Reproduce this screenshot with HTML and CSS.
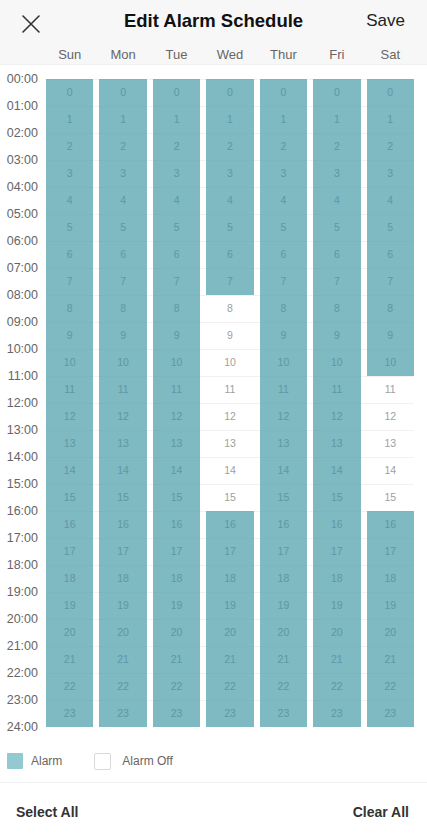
FILE: index.html
```html
<!DOCTYPE html>
<html>
<head>
<meta charset="utf-8">
<link rel="stylesheet" href="styles.css">
</head>
<body>
<div class="head">
  <div class="topbar">
    <svg class="close" width="18" height="18" viewBox="0 0 18 18"><path d="M1 1 L17 17 M17 1 L1 17" stroke="#333" stroke-width="1.6" fill="none" stroke-linecap="round"/></svg>
    <div class="title">Edit Alarm Schedule</div>
    <div class="save">Save</div>
  </div>
  <div class="days">
    <div class="spacer"></div>
    <div class="dayrow">
      <span>Sun</span><span>Mon</span><span>Tue</span><span>Wed</span><span>Thur</span><span>Fri</span><span>Sat</span>
    </div>
  </div>
</div>
<div class="body">
  <div class="times">
    <span>00:00</span><span>01:00</span><span>02:00</span><span>03:00</span><span>04:00</span><span>05:00</span><span>06:00</span><span>07:00</span><span>08:00</span><span>09:00</span><span>10:00</span><span>11:00</span><span>12:00</span><span>13:00</span><span>14:00</span><span>15:00</span><span>16:00</span><span>17:00</span><span>18:00</span><span>19:00</span><span>20:00</span><span>21:00</span><span>22:00</span><span>23:00</span><span>24:00</span>
  </div>
  <div class="grid" id="grid"></div>
</div>
<div class="legend">
  <span class="sw sw-on"></span><span class="lg">Alarm</span>
  <span class="sw sw-off"></span><span class="lg">Alarm Off</span>
</div>
<div class="bottom">
  <span>Select All</span>
  <span>Clear All</span>
</div>
<script src="app.js"></script>
</body>
</html>
```
FILE: app.js
```js
(function(){
  var off = {3:[8,15], 6:[11,15]};
  var g = document.getElementById('grid');
  for (var d = 0; d < 7; d++) {
    var col = document.createElement('div');
    col.className = 'col';
    for (var h = 0; h < 24; h++) {
      var c = document.createElement('div');
      var isOff = off[d] && h >= off[d][0] && h <= off[d][1];
      c.className = 'cell ' + (isOff ? 'off' : 'on');
      c.textContent = h;
      col.appendChild(c);
    }
    g.appendChild(col);
  }
})();
```
FILE: styles.css
```css
* { box-sizing: border-box; }
html, body { margin: 0; padding: 0; background: #fff; }
body {
  width: 427px;
  height: 840px;
  font-family: "Liberation Sans", Arial, sans-serif;
  overflow: hidden;
}
.head {
  background: #f7f7f7;
  height: 65px;
  border-bottom: 1px solid #efefef;
}
.topbar {
  height: 41px;
  display: flex;
  align-items: center;
  justify-content: space-between;
  padding: 0 22px 0 22px;
  position: relative;
}
.close { margin-top: 7px; }
.title {
  font-size: 18.5px;
  font-weight: bold;
  color: #111;
  position: absolute;
  left: 0; right: 0;
  text-align: center;
  pointer-events: none;
}
.save { font-size: 17px; color: #222; }
.days {
  display: flex;
  height: 24px;
  padding-right: 13px;
}
.spacer { width: 46px; flex: none; }
.dayrow {
  flex: 1;
  display: grid;
  grid-template-columns: repeat(7, 1fr);
  column-gap: 6px;
}
.dayrow span {
  text-align: center;
  font-size: 13px;
  color: #666;
  line-height: 27px;
}
.body {
  display: flex;
  padding-right: 13px;
}
.times {
  width: 46px;
  flex: none;
  display: flex;
  flex-direction: column;
  margin-top: 1px;
}
.times span {
  height: 27px;
  line-height: 27px;
  font-size: 12.5px;
  color: #666;
  text-align: right;
  padding-right: 8px;
}
.grid {
  flex: 1;
  margin-top: 13.5px;
  height: 648px;
  display: grid;
  grid-template-columns: repeat(7, 1fr);
  column-gap: 6px;
  background: repeating-linear-gradient(to bottom, #f1f1f1 0 1px, transparent 1px 27px);
}
.col { display: flex; flex-direction: column; }
.cell {
  height: 27px;
  line-height: 27px;
  text-align: center;
  font-size: 10.5px;
}
.on {
  background: linear-gradient(rgba(0,0,0,0.02), rgba(0,0,0,0.02)) top / 100% 1px no-repeat, #7fb9c2;
  color: #5d98a2;
}
.off { color: #a0a0a0; }
.legend {
  display: flex;
  align-items: center;
  margin-top: 12px;
  padding-left: 7px;
  height: 16px;
}
.sw { width: 16px; height: 16px; flex: none; border-radius: 1px; }
.sw-on { background: #93c9d1; }
.sw-off { border: 1px solid #dadada; background: #fff; border-radius: 2px; margin-left: 32px; width: 17px; height: 17px; }
.lg { font-size: 12px; color: #666; margin-left: 8px; }
.sw-off + .lg { margin-left: 11px; }
.bottom {
  margin-top: 13px;
  border-top: 1px solid #efefef;
  height: 58px;
  display: flex;
  align-items: center;
  justify-content: space-between;
  padding: 0 18px 0 16px;
  font-size: 14px;
  font-weight: bold;
  color: #333;
}
```
